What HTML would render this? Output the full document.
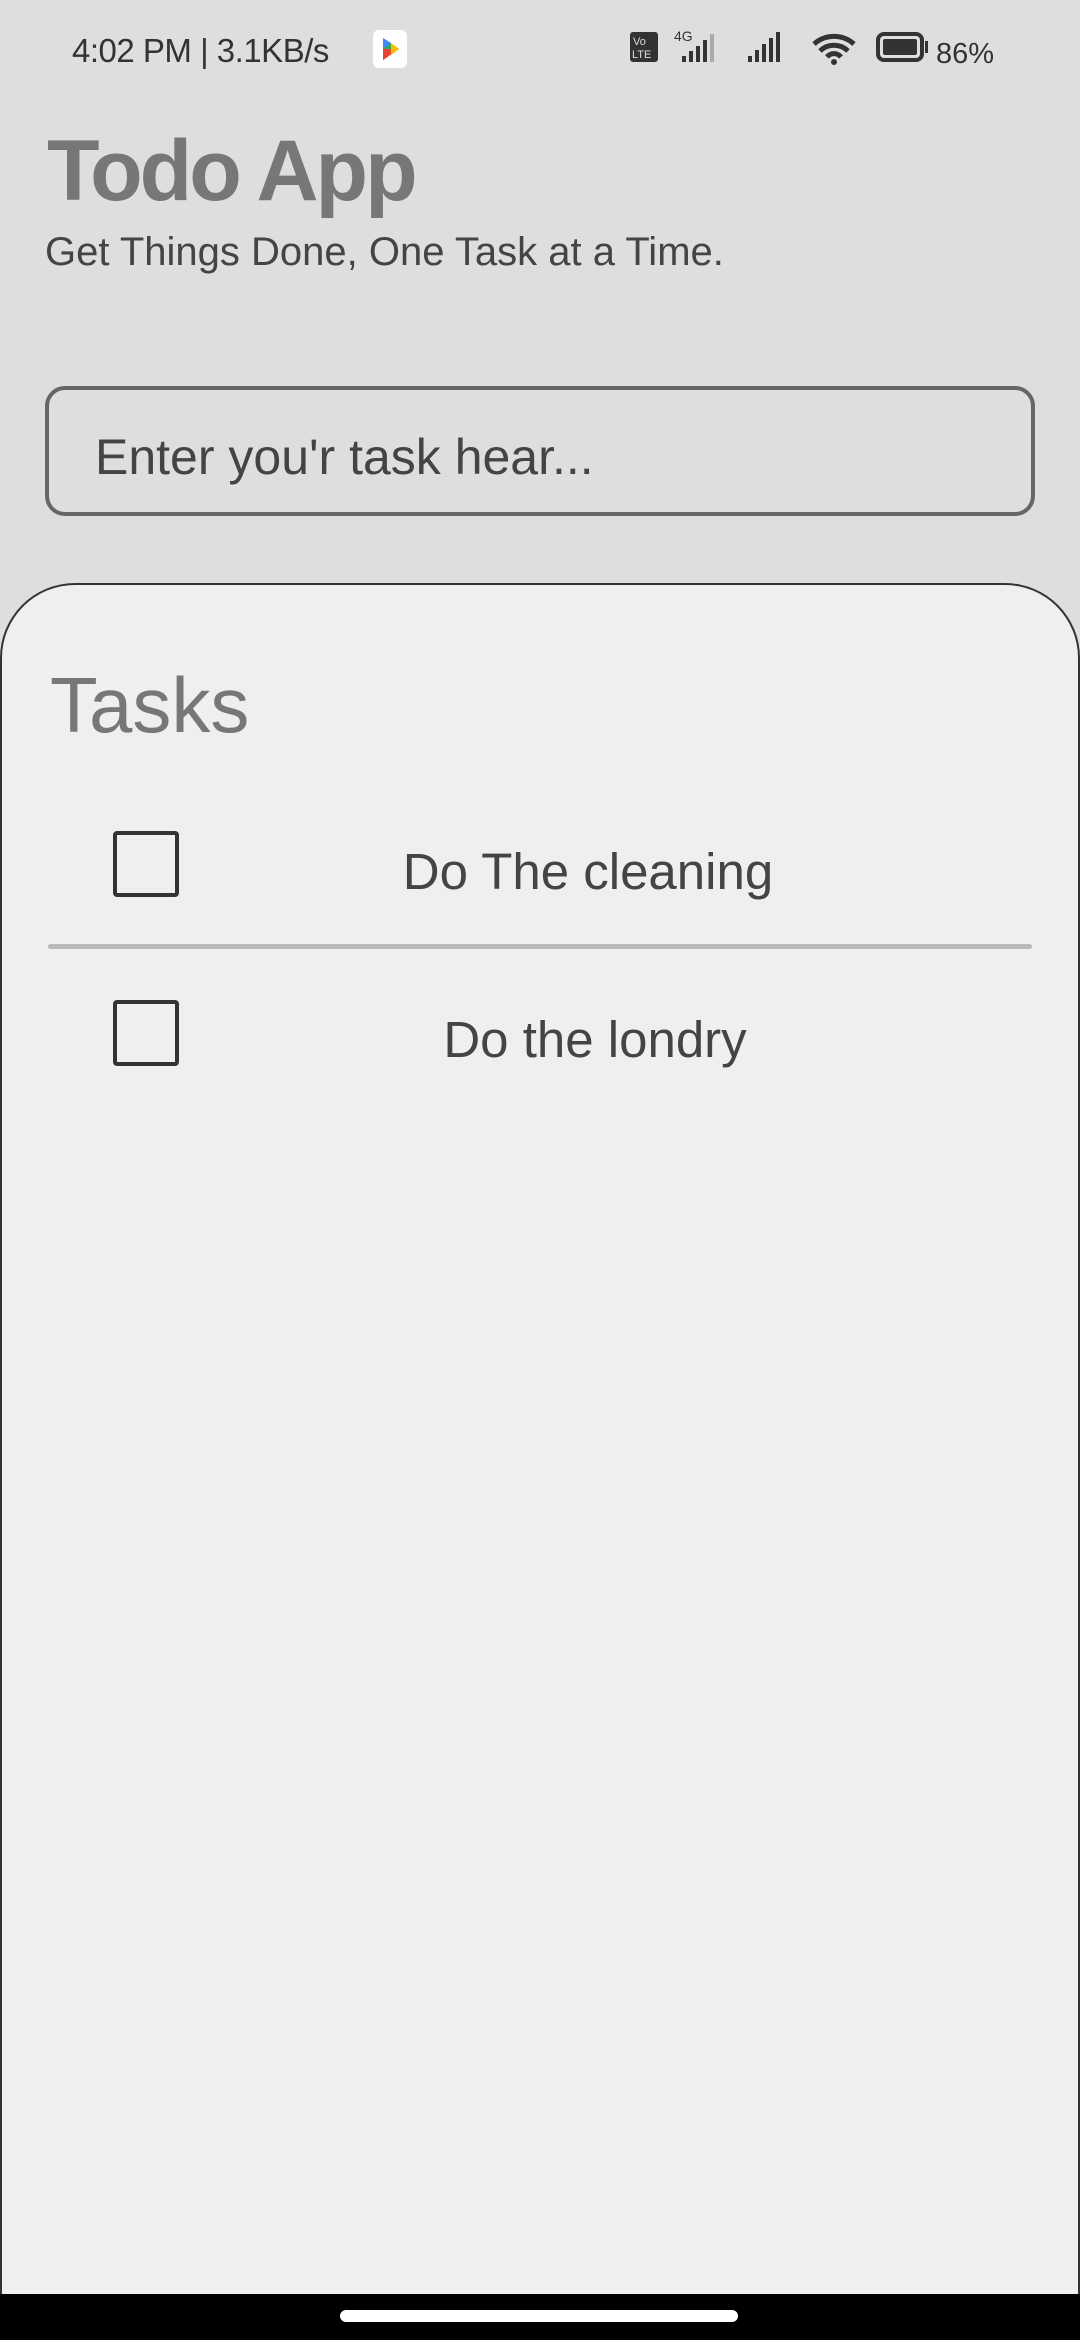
<!DOCTYPE html>
<html><head><meta charset="utf-8"><style>
*{margin:0;padding:0;box-sizing:border-box}
html,body{width:1080px;height:2340px;overflow:hidden}
body{background:#dedede;position:relative;font-family:"Liberation Sans",sans-serif}
.a{position:absolute;white-space:nowrap}
</style></head><body>
<div class="a" style="left:72px;top:32px;font-size:33px;color:#333;letter-spacing:-0.5px">4:02 PM | 3.1KB/s</div>
<div class="a" style="left:373px;top:30px;width:34px;height:38px;background:#fff;border-radius:6px"><svg width="34" height="38"><polygon points="10,8 26,19 10,30" fill="#34a853"/><polygon points="10,19 26,19 10,30" fill="#ea4335"/><polygon points="18,13 26,19 18,25" fill="#fbbc04"/><polygon points="10,8 18,13 10,19" fill="#4285f4"/></svg></div>
<svg class="a" style="left:628px;top:26px" width="380" height="40">
<rect x="2" y="6" width="28" height="30" rx="3" fill="#333"/><text x="5" y="19" font-size="11" fill="#ddd" font-family="Liberation Sans">Vo</text><text x="4" y="32" font-size="11" fill="#ddd" font-family="Liberation Sans">LTE</text>
<text x="46" y="15" font-size="14" fill="#333" font-family="Liberation Sans">4G</text>
<rect x="54" y="30" width="4" height="6" fill="#333"/><rect x="61" y="25" width="4" height="11" fill="#333"/><rect x="68" y="20" width="4" height="16" fill="#333"/><rect x="75" y="14" width="4" height="22" fill="#333"/><rect x="82" y="8" width="4" height="28" fill="#aaa"/>
<rect x="120" y="30" width="4" height="6" fill="#333"/><rect x="127" y="24" width="4" height="12" fill="#333"/><rect x="134" y="18" width="4" height="18" fill="#333"/><rect x="141" y="12" width="4" height="24" fill="#333"/><rect x="148" y="6" width="4" height="30" fill="#333"/>
<path d="M186 18a30 30 0 0 1 40 0M192 25a20 20 0 0 1 28 0M199 31a9 9 0 0 1 14 0" stroke="#333" stroke-width="5" fill="none"/><circle cx="206" cy="36" r="3" fill="#333"/>
<rect x="250" y="8" width="44" height="26" rx="6" stroke="#333" stroke-width="4" fill="none"/><rect x="255" y="13" width="34" height="16" rx="2" fill="#333"/><rect x="297" y="15" width="3" height="12" fill="#333"/>
<text x="308" y="37" font-size="29" fill="#333" font-family="Liberation Sans">86%</text>
</svg>
<div class="a" style="left:47px;top:122px;font-size:86px;font-weight:bold;color:#777;letter-spacing:-3px">Todo App</div>
<div class="a" style="left:45px;top:230px;font-size:40px;color:#444">Get Things Done, One Task at a Time.</div>
<div class="a" style="left:45px;top:386px;width:990px;height:130px;border:4px solid #666;border-radius:20px"></div>
<div class="a" style="left:95px;top:428px;font-size:50px;color:#444">Enter you'r task hear...</div>
<div class="a" style="left:0;top:583px;width:1080px;height:1711px;background:#efefef;border:2px solid #333;border-bottom:none;border-radius:75px 75px 0 0"></div>
<div class="a" style="left:50px;top:660px;font-size:78px;color:#777">Tasks</div>
<div class="a" style="left:113px;top:831px;width:66px;height:66px;border:4px solid #333;border-radius:4px"></div>
<div class="a" style="left:378px;top:842px;width:420px;text-align:center;font-size:51px;color:#444">Do The cleaning</div>
<div class="a" style="left:48px;top:944px;width:984px;height:5px;background:#bbb;border-radius:3px"></div>
<div class="a" style="left:113px;top:1000px;width:66px;height:66px;border:4px solid #333;border-radius:4px"></div>
<div class="a" style="left:395px;top:1010px;width:400px;text-align:center;font-size:51px;color:#444">Do the londry</div>
<div class="a" style="left:0;top:2294px;width:1080px;height:46px;background:#000"></div>
<div class="a" style="left:340px;top:2310px;width:398px;height:12px;background:#fff;border-radius:6px"></div>
</body></html>
